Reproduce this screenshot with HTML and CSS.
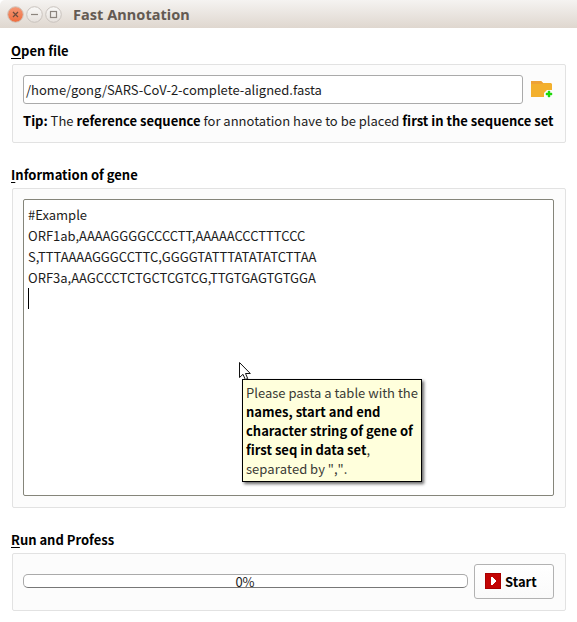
FILE: index.html
```html
<!DOCTYPE html>
<html lang="en">
<head>
<meta charset="utf-8">
<title>Fast Annotation</title>
<link rel="stylesheet" href="styles.css">
</head>
<body>
<header class="titlebar">
  <svg class="controls" width="58" height="20" viewBox="0 0 58 20">
    <defs>
      <linearGradient id="close" x1="0" y1="0" x2="0" y2="1"><stop offset="0" stop-color="#f59a78"/><stop offset="1" stop-color="#ee6b3c"/></linearGradient>
      <linearGradient id="plain" x1="0" y1="0" x2="0" y2="1"><stop offset="0" stop-color="#faf9f8"/><stop offset="1" stop-color="#e6e1dc"/></linearGradient>
    </defs>
    <circle cx="10.500" cy="9.500" r="7.800" fill="url(#close)" stroke="#d0c6be"/>
    <path d="M8 7l5 5M13 7l-5 5" stroke="#6d4c3d" stroke-width="1.200"/>
    <circle cx="29.500" cy="9.500" r="7.800" fill="url(#plain)" stroke="#c9c3be"/>
    <path d="M26 9.500h7" stroke="#8c857e" stroke-width="1.200"/>
    <circle cx="48.500" cy="9.500" r="7.800" fill="url(#plain)" stroke="#c9c3be"/>
    <rect x="45.500" y="6.500" width="6" height="6" fill="none" stroke="#8c857e" stroke-width="1.200"/>
  </svg>
  <h1 class="title">Fast Annotation</h1>
</header>
<main class="content">
  <section>
    <h2 class="heading"><span class="key">O</span>pen file</h2>
    <div class="group file">
      <div class="file-row">
        <div class="field">/home/gong/SARS-CoV-2-complete-aligned.fasta</div>
        <svg class="folder" width="23" height="19" viewBox="0 0 23 19">
          <path d="M0 1h10l2 2h8l1 1v13H0z" fill="#f3b02e"/>
          <path d="M0 1h10l2 2v1H0z" fill="#eea236"/>
          <path d="M13 18v-5l3-3h6v8z" fill="#fcfcfc"/>
          <path d="M17 11h2v2h2v2h-2v2h-2v-2h-2v-2h2z" fill="#1fd80a" stroke="#1fd80a" stroke-width=".4"/>
        </svg>
      </div>
      <p class="tip"><b>Tip:</b> The <b>reference sequence</b> for annotation have to be placed <b>first in the sequence set</b></p>
    </div>
  </section>
  <section>
    <h2 class="heading"><span class="key">I</span>nformation of gene</h2>
    <div class="group gene">
      <div class="editor">
        <div>#Example</div>
        <div>ORF1ab,AAAAGGGGCCCCTT,AAAAACCCTTTCCC</div>
        <div>S,TTTAAAAGGGCCTTC,GGGGTATTTATATATCTTAA</div>
        <div>ORF3a,AAGCCCTCTGCTCGTCG,TTGTGAGTGTGGA</div>
        <div class="caret"></div>
      </div>
    </div>
  </section>
  <section>
    <h2 class="heading"><span class="key">R</span>un and Profess</h2>
    <div class="group run">
      <div class="progress"><span>0%</span></div>
      <button class="start">
        <svg width="16" height="16" viewBox="0 0 16 16">
          <rect width="16" height="16" fill="#a80000"/>
          <rect x="1" y="1" width="14" height="14" fill="#c30404"/>
          <path d="M6 4h2v1h1v1h1v1h1v2h-1v1H9v1H8v1H6z" fill="#fff"/>
        </svg>
        <span>Start</span>
      </button>
    </div>
  </section>
</main>
<div class="tooltip">Please pasta a table with the<br><b>names, start and end</b><br><b>character string of gene of</b><br><b>first seq in data set</b>,<br><span class="unkerned">separated by ",".</span></div>
<svg class="pointer" width="14" height="20" viewBox="0 0 14 20">
  <path d="M1.500 1.500v15l3.500-3.200 2.300 5.200 2.400-1-2.200-5h4.800z" fill="#fff" stroke="#111"/>
</svg>
</body>
</html>
```
FILE: styles.css
```css
* { box-sizing: border-box; }
body {
  margin: 0;
  width: 577px;
  height: 622px;
  overflow: hidden;
  position: relative;
  background: #fff;
  color: #1c1c1c;
  font: 13px/20px "Noto Sans CJK SC", "Noto Sans", sans-serif;
}
h1, h2, p { margin: 0; }
b { color: #000; }
.titlebar {
  display: flex;
  align-items: center;
  height: 28px;
  padding: 1px 0 0 5px;
  background: linear-gradient(#f5f3f1, #dfd7cf);
  border-radius: 5px 0 0 0;
}
.title {
  margin: -2px 0 0 10px;
  font: bold 14.500px/20px "Noto Sans", sans-serif;
  letter-spacing: .05px;
  color: #635a53;
}
.content { padding: 0 11px 0 12px; }
.heading {
  height: 36px;
  padding-top: 13px;
  margin-left: -1px;
  font-size: 13px;
  line-height: 20px;
  font-weight: bold;
  color: #000;
}
section + section .heading { height: 45px; padding-top: 22px; }
.key {
  text-decoration: underline;
  text-decoration-thickness: 1px;
  text-underline-offset: 2px;
  text-decoration-skip-ink: none;
}
.group {
  border: 1px solid #e2e2e2;
  border-radius: 2px;
  background: #fcfcfc;
  padding: 10px;
}
.file { height: 79px; }
.file-row { display: flex; align-items: center; gap: 8px; }
.field {
  width: 500px;
  height: 29px;
  padding: 4px 2px;
  border: 1px solid #aaa;
  border-radius: 3px;
  background: #fff;
}
.tip { margin-top: 7px; white-space: nowrap; }
.gene { height: 320px; padding-right: 11px; }
.editor {
  height: 297px;
  padding: 4px 4px;
  border: 1px solid #85857a;
  border-radius: 2px;
  background: #fff;
  line-height: 21px;
  white-space: nowrap;
}
.caret { width: 1px; height: 21px; background: #000; }
.run {
  display: flex;
  align-items: center;
  gap: 6px;
  height: 58px;
  padding: 0 11px 1px 10px;
}
.progress {
  width: 445px;
  height: 14px;
  margin-bottom: 1px;
  border: 1px solid #aaa;
  border-bottom-color: #777;
  border-radius: 5px;
  background: #fff;
  text-align: center;
  text-indent: -1px;
  line-height: 14px;
}
.start {
  display: flex;
  align-items: center;
  gap: 4px;
  width: 80px;
  height: 35px;
  padding: 0 0 0 10px;
  border: 1px solid #b2b2b2;
  border-radius: 3px;
  background: linear-gradient(#fff, #fafafa);
  font: bold 13px/20px "Noto Sans CJK SC", sans-serif;
  color: #000;
}
.start svg { margin-bottom: 1px; }
.tooltip {
  position: absolute;
  left: 242px;
  top: 379px;
  width: 180px;
  height: 103px;
  padding: 3px 3px;
  border: 1px solid #000;
  background: #ffffdc;
  box-shadow: 2px 2px 3px rgba(0, 0, 0, .6);
  line-height: 19px;
  white-space: nowrap;
  color: #3a3a35;
}
.unkerned { font-kerning: none; }
.pointer { position: absolute; left: 238px; top: 361px; }
```
